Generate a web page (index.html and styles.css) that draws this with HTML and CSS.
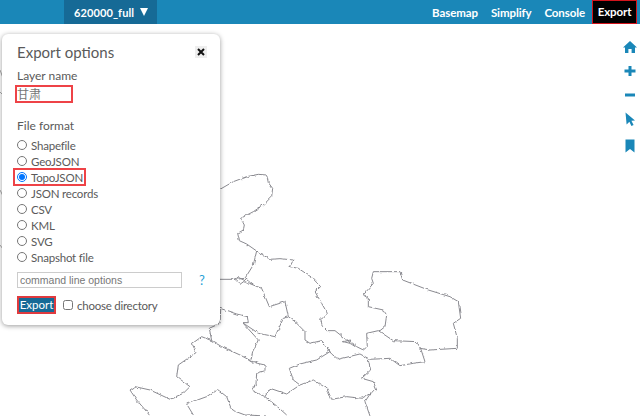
FILE: index.html
```html
<!DOCTYPE html>
<html lang="en">
<head>
    <meta charset="UTF-8">
    <meta name="viewport" content="width=device-width, initial-scale=1.0">
    <title>Export options</title>
    <link rel="stylesheet" href="styles.css">
</head>
<body>
    <header class="topbar">
        <div class="layer-btn"><span>620000_full</span><span class="caret"></span></div>
        <nav class="menu">
            <span class="menu-item">Basemap</span>
            <span class="menu-item">Simplify</span>
            <span class="menu-item console-item">Console</span>
            <span class="menu-item export-tab">Export</span>
        </nav>
    </header>

    <svg class="map" width="640" height="416" viewBox="0 0 640 416">
        <defs>
            <filter id="rough" filterUnits="userSpaceOnUse" x="0" y="0" width="640" height="416" color-interpolation-filters="sRGB">
                <feTurbulence type="fractalNoise" baseFrequency="0.22" numOctaves="2" seed="4" result="noise"/>
                <feDisplacementMap in="SourceGraphic" in2="noise" scale="3" xChannelSelector="R" yChannelSelector="G"/>
                <feGaussianBlur stdDeviation="0.35"/>
            </filter>
        </defs>
        <g class="map-lines" filter="url(#rough)">
            <g transform="translate(130 170) scale(.3333)">
                <path d="M270 58 L310 35 L350 20 L385 13 L410 15 L415 38 L428 55 L425 80 L400 105 L370 125 L332 145 L343 165 L340 180 L323 190 L328 212 L350 222 L380 243 L420 268 L450 266 L490 270 L480 290 L505 295 L545 322 L572 350 L555 365 L575 400 L592 430 L572 450 L578 470 L590 482 L615 482 L650 510 L680 530 L700 540 L712 530 L710 490 L745 482 L790 512 L860 515 L872 535 L885 575 L850 580 L810 587 L780 565 L720 568 L690 552 L625 568 L605 552 L575 512 L540 520 L525 510 L525 485 L495 455 L475 440 L465 395 L418 410 L395 355 L370 345 L345 325 L370 285 L380 243"/>
                <path d="M270 328 L315 328 L345 325 M315 328 L325 322 L345 332 L330 343 L315 328"/>
                <path d="M345 335 L370 345"/>
                <path d="M270 415 L320 432 L352 440 L355 458 L338 458 L385 490 L435 500 L460 445 L475 440"/>
                <path d="M272 420 L270 460 L238 475 L245 512 L275 530 L330 555 L362 572 L382 580 L405 585 L405 602 L380 610 L378 640 L365 660 L405 680 L440 708 L470 735"/>
                <path d="M385 510 L368 545 L362 572 L370 582"/>
                <path d="M338 458 L385 510"/>
                <path d="M245 512 L215 500 L185 522 L198 548 L145 585 L140 620 L180 650 L160 670 L120 688 L60 660 L15 650 L0 660"/>
                <path d="M0 660 L20 690 L50 725 L60 738"/>
                <path d="M170 702 L230 680 L262 658 L290 680 L305 720 L345 735 L410 738"/>
                <path d="M170 702 L190 735"/>
                <path d="M575 512 L600 545 L560 570 L510 582 L478 595 L490 630 L510 645 L550 630 L590 655 L605 688 L650 680 L695 685 L740 660 L730 635 L695 625 L722 600 L715 568"/>
                <path d="M510 645 L470 672 L420 655 L405 680"/>
                <path d="M725 665 L705 695 L720 738"/>
                <path d="M640 515 L662 510 L660 520 Z"/>
            </g>
            <g transform="translate(340 260) scale(.3333)">
                <path d="M240 265 L270 270 L352 265 L352 235 L340 190 L362 175 L355 125 L330 110 L265 90 L188 60 L180 35 L100 35 L95 55 L100 70 L70 105 L85 115 L85 140 L130 150 L140 165 L135 200 L120 212"/>
            </g>
        </g>
        <path class="map-scrap" d="M0 70 L3 78 M0 92 L4 96 M0 190 L3 196 M0 245 L3 249"/>
    </svg>

    <div class="side-tools">
        <svg class="tool" width="14" height="14" viewBox="0 0 14 14"><path d="M7 1 L14 7.5 L12 7.5 L12 13 L8.6 13 L8.6 9 L5.4 9 L5.4 13 L2 13 L2 7.5 L0 7.5 Z"/></svg>
        <svg class="tool" width="14" height="14" viewBox="0 0 14 14"><path d="M5.5 2 H8.5 V5.5 H12.5 V8.5 H8.5 V12 H5.5 V8.5 H1.5 V5.5 H5.5 Z"/></svg>
        <svg class="tool" width="14" height="14" viewBox="0 0 14 14"><path d="M2 5.5 H12 V8.5 H2 Z"/></svg>
        <svg class="tool" width="14" height="14" viewBox="0 0 14 14"><path d="M2.5 0.5 L12 8.5 L8.4 8.8 L10.6 13 L8.4 14 L6.4 9.8 L3.6 12.5 Z"/></svg>
        <svg class="tool tool-last" width="14" height="14" viewBox="0 0 14 14"><path d="M2.5 0.5 H11.5 V13.5 L7 10 L2.5 13.5 Z"/></svg>
    </div>

    <section class="panel">
        <div class="panel-head">
            <h3 class="panel-title">Export options</h3>
            <span class="close-btn">
                <svg width="8" height="8" viewBox="0 0 8 8"><path d="M1 1 L7 7 M7 1 L1 7"/></svg>
            </span>
        </div>
        <div class="field-label">Layer name</div>
        <div class="name-box">甘肃</div>
        <div class="field-label format-label">File format</div>
        <div class="formats">
            <label class="format"><input type="radio" name="fmt">Shapefile</label>
            <label class="format"><input type="radio" name="fmt">GeoJSON</label>
            <label class="format format-picked"><input type="radio" name="fmt" checked>TopoJSON</label>
            <label class="format"><input type="radio" name="fmt">JSON records</label>
            <label class="format"><input type="radio" name="fmt">CSV</label>
            <label class="format"><input type="radio" name="fmt">KML</label>
            <label class="format"><input type="radio" name="fmt">SVG</label>
            <label class="format"><input type="radio" name="fmt">Snapshot file</label>
        </div>
        <div class="options-row">
            <input class="options-input" type="text" placeholder="command line options">
            <span class="help">?</span>
        </div>
        <div class="action-row">
            <button class="export-btn" type="button">Export</button>
            <label class="choose"><input type="checkbox">choose directory</label>
        </div>
    </section>
</body>
</html>
```

FILE: styles.css
```css
html, body { margin: 0; padding: 0; width: 640px; height: 416px; overflow: hidden; background: #fff; }
body { font-family: Lato, "Noto Sans CJK SC", sans-serif; color: #5a5a5a; }

.topbar { display: flex; justify-content: space-between; height: 24px; background: #1a87b8; color: #fff; font-size: 11.5px; font-weight: 700; letter-spacing: -.1px; padding: 0 3px 0 64px; box-sizing: border-box; }
.layer-btn { display: flex; align-items: center; gap: 6px; width: 93px; padding-left: 10px; box-sizing: border-box; background: #166a96; font-size: 11px; letter-spacing: .1px; }
.caret { width: 0; height: 0; border-left: 4.5px solid transparent; border-right: 4.5px solid transparent; border-top: 8px solid #fff; }
.menu { display: flex; align-items: center; height: 24px; }
.menu-item { margin-right: 13px; }
.console-item { margin-right: 7px; }
.export-tab { margin-right: 0; background: #000; border: 1px solid #d2141c; height: 24px; line-height: 22px; width: 45px; box-sizing: border-box; text-align: center; }

.map { position: absolute; left: 0; top: 0; }
.map-lines { fill: none; stroke: #8a8a90; stroke-linejoin: round; }
.map-lines g { stroke-width: 3; }
.map-scrap { stroke: #aaa; fill: none; }

.side-tools { position: absolute; top: 40px; right: 3px; display: flex; flex-direction: column; gap: 10px; }
.tool { display: block; fill: #1a87b8; }
.tool-last { margin-top: 3px; }

.panel { position: absolute; left: 2px; top: 34px; width: 218px; height: 291px; box-sizing: border-box; padding: 7px 15px; background: #fff; border-radius: 6px; box-shadow: 0 1px 5px rgba(0, 0, 0, .4); }
.panel-head { display: flex; justify-content: space-between; align-items: center; height: 22px; margin-bottom: 4px; }
.panel-title { margin: 0; font-size: 15px; font-weight: 400; color: #5a5a5a; }
.close-btn { display: flex; align-items: center; justify-content: center; width: 12px; height: 12px; margin-right: -2px; background: #eee; }
.close-btn path { stroke: #111; stroke-width: 2; fill: none; }

.field-label { font-size: 12px; line-height: 18px; }
.name-box { width: 58px; height: 18px; box-sizing: border-box; margin: 0 0 0 -2px; border: 2px solid #ee4347; font-size: 12px; line-height: 16px; color: #777; }
.format-label { margin-top: 14px; }

.formats { display: flex; flex-direction: column; margin-top: 2px; }
.format { display: flex; align-items: center; height: 16px; font-size: 11.5px; letter-spacing: -.2px; }
.format input { width: 10px; height: 10px; margin: 0 4px 0 0; }
.format-picked { position: relative; }
.format-picked::before { content: ""; position: absolute; left: -4px; top: -1px; width: 73px; height: 18px; border: 2px solid #ee4347; box-sizing: border-box; }

.options-row { display: flex; align-items: center; margin-top: 7px; }
.options-input { width: 165px; height: 16px; box-sizing: border-box; padding: 0 2px; border: 1px solid #ccc; font-family: "Liberation Sans", sans-serif; font-size: 10.5px; }
.options-input::placeholder { color: #777; }
.help { margin-left: 17px; font-size: 13px; color: #2a9fd6; }

.action-row { display: flex; align-items: center; margin-top: 8px; }
.export-btn { width: 39px; height: 18px; padding: 0; background: #166a96; color: #fff; border: 2px solid #e03a3e; font-family: inherit; font-size: 11.5px; font-weight: 400; line-height: 12px; }
.choose { display: flex; align-items: center; margin-left: 7px; font-size: 11.5px; letter-spacing: -.25px; }
.choose input { width: 10px; height: 10px; margin: 0 4px 0 0; }
```
